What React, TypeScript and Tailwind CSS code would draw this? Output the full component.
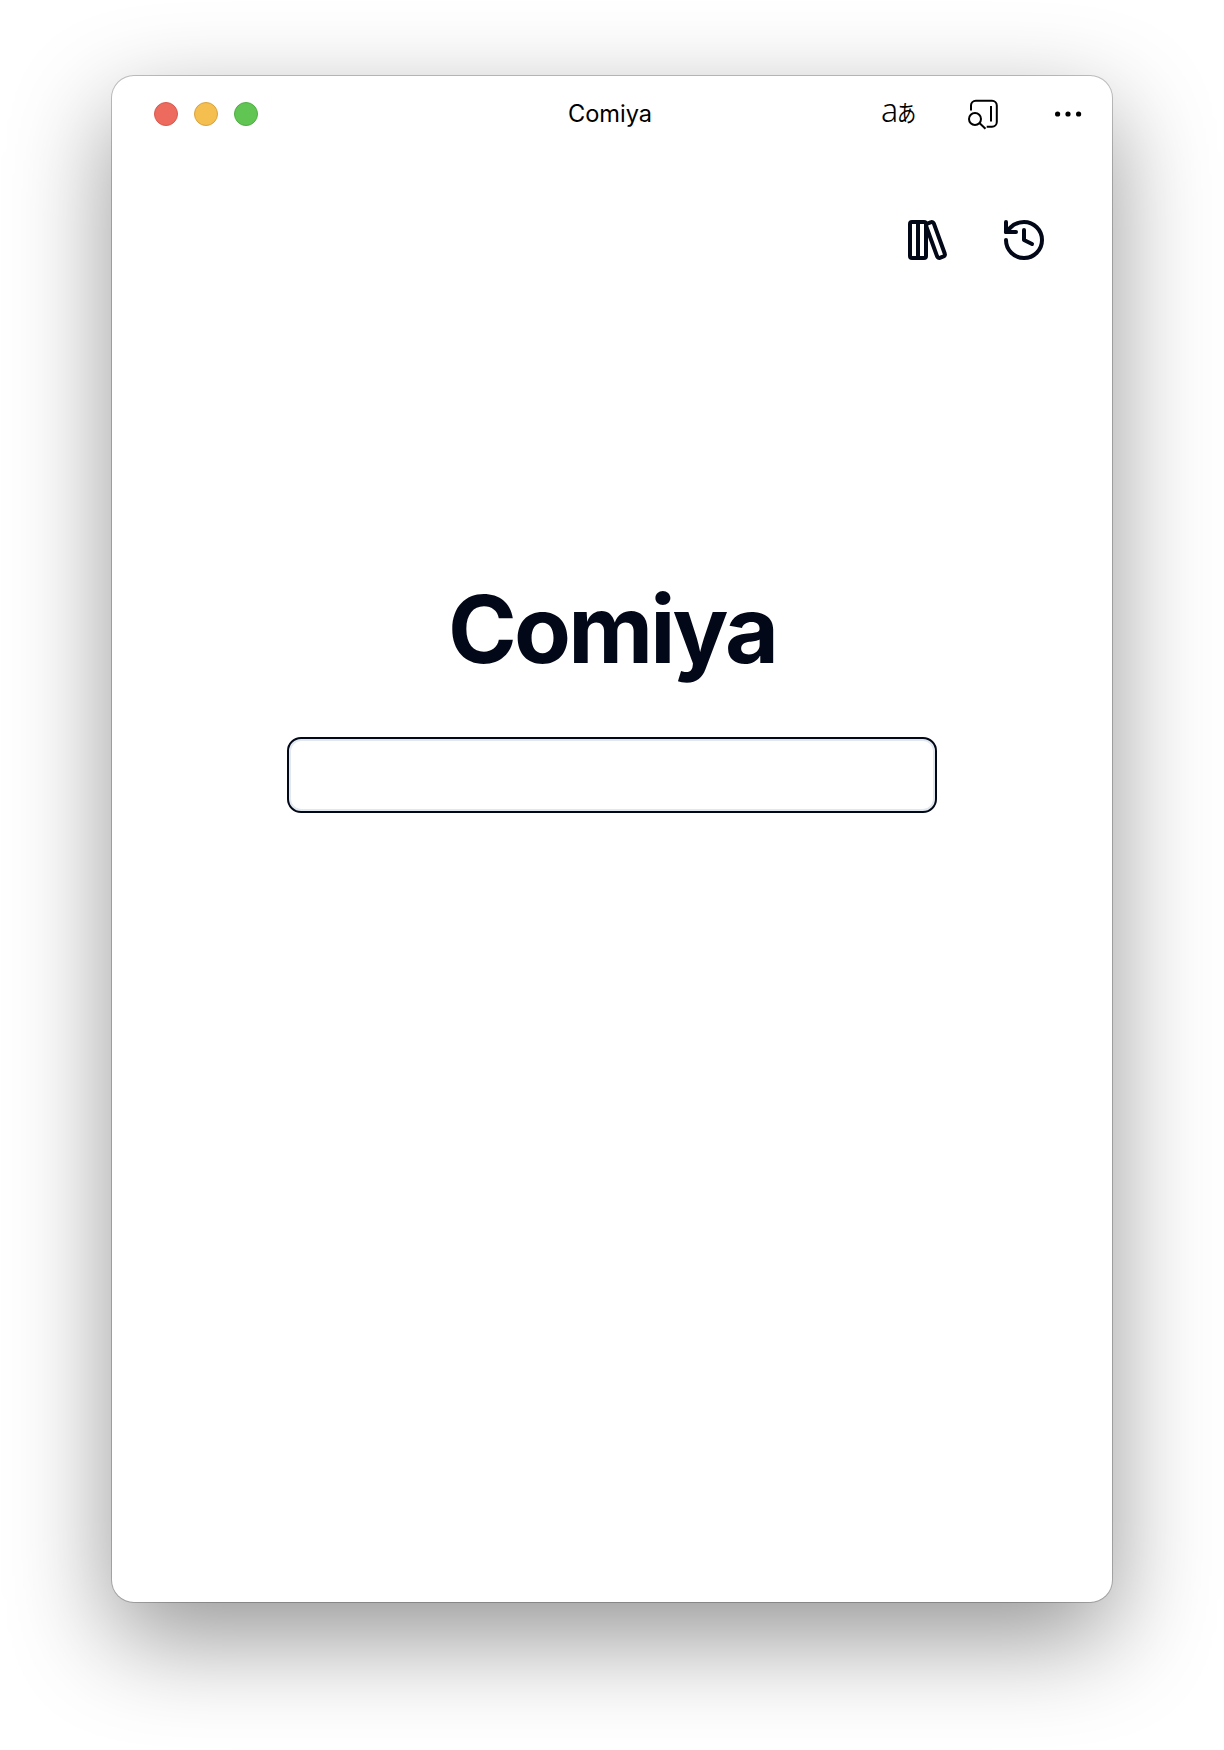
import { History, LibraryBig } from 'lucide-react';

function TitleBar() {
  return (
    <header className="grid h-[76px] grid-cols-3 items-center">
      <div className="flex gap-4 pl-[42px]">
        <span className="size-6 rounded-full border border-[#d9594f] bg-[#ec6a5e]" />
        <span className="size-6 rounded-full border border-[#d8a23e] bg-[#f4bf4f]" />
        <span className="size-6 rounded-full border border-[#50ad43] bg-[#61c554]" />
      </div>
      <div className="pr-[4px] text-center text-[23.6px] leading-none">Comiya</div>
      <div className="flex items-center justify-end pr-[29px]">
        <div className="flex w-[36px] -translate-y-[3px] items-baseline text-black">
          <span className="w-[16px] origin-left scale-x-[0.97] font-['Noto_Sans'] text-[33px] leading-[32px] font-[350]">a</span>
          <span className="w-[18px] origin-left scale-x-[0.8] font-['Noto_Sans_CJK_JP',sans-serif] text-[24px] leading-[32px]">あ</span>
        </div>
        <svg className="ml-[50px]" width="32" height="32" viewBox="0 0 32 32" fill="none" stroke="black" strokeWidth="2">
          <path d="M4 12.5V7.5a4.8 4.8 0 0 1 4.8-4.8H25a4.8 4.8 0 0 1 4.8 4.8v16.4a4.8 4.8 0 0 1-4.8 4.8h-5.3M24 8v15.5" />
          <circle cx="8" cy="21" r="6" />
          <path d="m12.4 25 6.1 5.7" />
        </svg>
        <svg className="ml-[56px]" width="28" height="8" viewBox="0 0 28 8">
          <circle cx="2.6" cy="4" r="2.6" />
          <circle cx="13" cy="4" r="2.6" />
          <circle cx="23.6" cy="4" r="2.6" />
        </svg>
      </div>
    </header>
  );
}

export default function App() {
  return (
    <div className="flex h-[1750px] w-[1224px] justify-center bg-white pt-[76px] font-['Inter',sans-serif]">
      <main className="flex h-[1526px] w-[1000px] flex-col rounded-[22px] bg-white shadow-[0_0_0_1px_rgba(0,0,0,0.22),0_36px_100px_rgba(0,0,0,0.42)]">
        <TitleBar />
        <nav className="mt-16 flex justify-end gap-12 pr-16 text-[#020817]">
          <LibraryBig size={48} />
          <History size={48} />
        </nav>
        <section className="mt-[317px] flex flex-col items-center text-[#020817]">
          <h1 className="text-[93px] leading-[96px] font-bold tracking-[-0.03em]">Comiya</h1>
          <input
            aria-label="Search"
            className="mt-[60px] h-[76px] w-[650px] rounded-[14px] border-2 border-[#020817] bg-white px-6 text-2xl shadow-[inset_0_0_0_2px_#e2e8f0] outline-none"
          />
        </section>
      </main>
    </div>
  );
}
